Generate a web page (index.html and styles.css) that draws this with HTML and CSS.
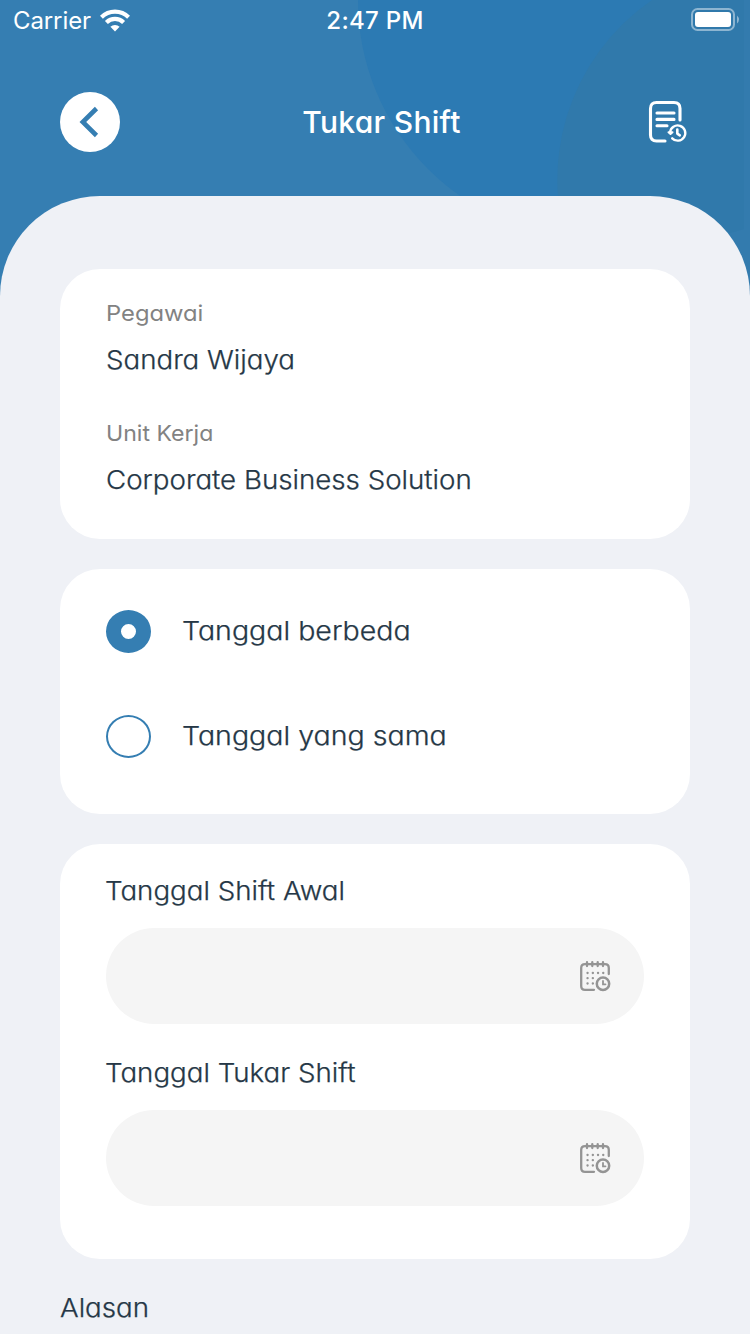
FILE: index.html
```html
<!DOCTYPE html>
<html lang="id">
<head>
<meta charset="utf-8">
<title>Tukar Shift</title>
<link rel="stylesheet" href="styles.css">
</head>
<body>
<div class="screen">
  <svg class="backdrop" width="750" height="300" viewBox="0 0 750 300" aria-hidden="true">
    <circle cx="597" cy="0" r="239" fill="#2c7ab3"/>
    <path d="M652 0A218 218 0 0 0 573 261H750V228L744 229V0Z" fill="#3079ab"/>
    <path d="M744 0H750V300H700V239Q725 235 744 229Z" fill="#337bae"/>
  </svg>
  <div class="statusbar">
    <div class="carrier"><span class="carrier-name">Carrier</span>
      <svg width="30" height="23" viewBox="0 0 30 23" fill="none" stroke="#fff" stroke-width="4.2">
        <path d="M1.400 8.200A19.200 19.200 0 0 1 28.600 8.200"/>
        <path d="M6.400 13.400A12.200 12.200 0 0 1 23.600 13.400"/>
        <path d="M10.400 17.800A6.500 6.500 0 0 1 19.600 17.800L15 22.400Z" fill="#fff" stroke="none"/>
      </svg>
    </div>
    <div class="clock">2:47 PM</div>
    <svg class="battery" width="48" height="24" viewBox="0 0 48 24">
      <rect x="1" y="1" width="42" height="21" rx="5.5" fill="none" stroke="#fff" stroke-opacity=".45" stroke-width="2"/>
      <rect x="4" y="4" width="36" height="15" rx="3" fill="#fff"/>
      <path d="M46 7.5Q50 11.5 46 15.5Z" fill="#fff" fill-opacity=".45"/>
    </svg>
  </div>
  <header class="header">
    <button class="back" aria-label="Kembali">
      <svg width="60" height="60" viewBox="0 0 60 60" fill="none" stroke="#357eb2" stroke-width="4.6"><path d="M36.500 16.500L22.800 30L36.500 43.500"/></svg>
    </button>
    <h1 class="title">Tukar Shift</h1>
    <svg class="history" width="40" height="44" viewBox="0 0 40 44" fill="none" stroke="#fff" stroke-width="3.100" stroke-linecap="round" stroke-linejoin="round">
      <path d="M17 41H8.500Q2.500 41 2.500 35V8.500Q2.500 2.500 8.500 2.500H26Q32 2.500 32 8.500V20"/>
      <path d="M9 13H26M9 19.400H26M9 25.800H19"/>
      <path d="M22.100 32.500A7.600 7.600 0 1 1 24.200 38.300" stroke-width="2.400"/>
      <path d="M20.500 32.200L22.500 34L24.500 32.200Z" stroke-width="2"/>
      <path d="M29.300 29.500V33.600L31.800 35.300" stroke-width="2.600"/>
    </svg>
  </header>
  <main class="sheet">
    <section class="card card-info">
      <div class="label pegawai">Pegawai</div>
      <div class="text sandra">Sandra Wijaya</div>
      <div class="label unit">Unit Kerja</div>
      <div class="text corporate">Corporate Business Solution</div>
    </section>
    <section class="card card-options">
      <div class="option"><span class="radio radio-on"></span><span class="text berbeda">Tanggal berbeda</span></div>
      <div class="option"><span class="radio"></span><span class="text sama">Tanggal yang sama</span></div>
    </section>
    <section class="card card-dates">
      <div class="text awal">Tanggal Shift Awal</div>
      <div class="field"><svg class="calendar" width="32" height="32" viewBox="0 0 32 32"><use href="#cal"/></svg></div>
      <div class="text tukar">Tanggal Tukar Shift</div>
      <div class="field"><svg class="calendar" width="32" height="32" viewBox="0 0 32 32"><use href="#cal"/></svg></div>
    </section>
    <div class="text alasan">Alasan</div>
  </main>
</div>
<svg width="0" height="0" class="defs">
  <symbol id="cal" viewBox="0 0 32 32">
    <g fill="none" stroke="#949494" stroke-width="2.300" stroke-linecap="round">
      <path d="M15 29.800H6Q2.200 29.800 2.200 26V8Q2.200 4.200 6 4.200H26Q29.800 4.200 29.800 8V14"/>
      <path d="M8 2.200V6M13.300 2.200V6M18.700 2.200V6M24 2.200V6"/>
      <circle cx="24" cy="23.700" r="6.200" stroke-width="2.500"/>
      <path d="M24 21V24.300H26.500" stroke-width="1.800"/>
      <path d="M8.500 13H8.600M13.800 13H13.900M19 13H19.100M24.200 13H24.300M8.500 18.200H8.600M13.800 18.200H13.900M8.500 23.500H8.600M13.800 23.500H13.900"/>
    </g>
  </symbol>
</svg>
</body>
</html>
```
FILE: styles.css
```css
* { box-sizing: border-box; }
body { margin: 0; font-family: Inter, "Noto Sans", sans-serif; }
.screen { position: relative; width: 750px; height: 1334px; overflow: hidden; background: #357eb2; color: #253746; }
.backdrop { position: absolute; top: 0; left: 0; }
.defs { position: absolute; }
.statusbar { position: relative; display: grid; grid-template-columns: 1fr auto 1fr; align-items: center; height: 40px; padding: 0 11px 0 13px; color: #fff; font-size: 24px; }
.carrier { display: flex; align-items: center; gap: 9px; letter-spacing: -.1px; }
.clock { margin-left: -2px; font-weight: 500; letter-spacing: .3px; }
.battery { justify-self: end; }
.header { position: relative; display: flex; align-items: center; justify-content: space-between; height: 156px; padding: 8px 62px 0 60px; }
.back { width: 60px; height: 60px; padding: 0; border: 0; border-radius: 50%; background: #fff; }
.back svg { display: block; }
.title { margin: 0 5px 0 0; color: #fff; font-size: 30px; font-weight: 500; letter-spacing: .3px; font-feature-settings: "cv11"; }
.sheet { position: relative; height: 1138px; padding: 73px 60px 0; border-radius: 100px 100px 0 0; background: #eff1f6; }
.card { margin-bottom: 30px; padding: 0 46px; border-radius: 40px; background: #fff; }
.card-info { height: 270px; padding-top: 25px; }
.card-options { height: 245px; padding-top: 40px; }
.card-dates { height: 415px; padding-top: 27px; }
.text { height: 40px; line-height: 40px; font-size: 26px; font-weight: 300; white-space: nowrap; font-feature-settings: "cv11"; -webkit-text-stroke: .25px currentColor; transform: scaleX(1.065); transform-origin: 0 50%; }
.label { height: 40px; line-height: 38px; color: #828282; font-size: 22px; font-weight: 400; font-feature-settings: "cv11"; transform-origin: 0 50%; }
.pegawai { transform: scaleX(1.08); }
.unit { transform: scaleX(1.05); }
.sandra { margin: 6px 0 34px; }
.corporate { margin-top: 6px; }
.option { display: flex; align-items: center; gap: 31px; height: 44px; margin-bottom: 61px; }
.option .text { transform: scaleX(1.098); }
.radio { width: 45px; height: 43px; border: 2px solid #357eb2; border-radius: 50%; }
.radio-on { border-width: 14px 15px; background: #fff; }
.awal, .tukar { margin-left: -1px; }
.field { display: flex; align-items: center; justify-content: flex-end; height: 96px; margin: 17px 0 29px; padding-right: 33px; border-radius: 48px; background: #f5f5f5; }
.alasan { margin-top: -1px; }
```
